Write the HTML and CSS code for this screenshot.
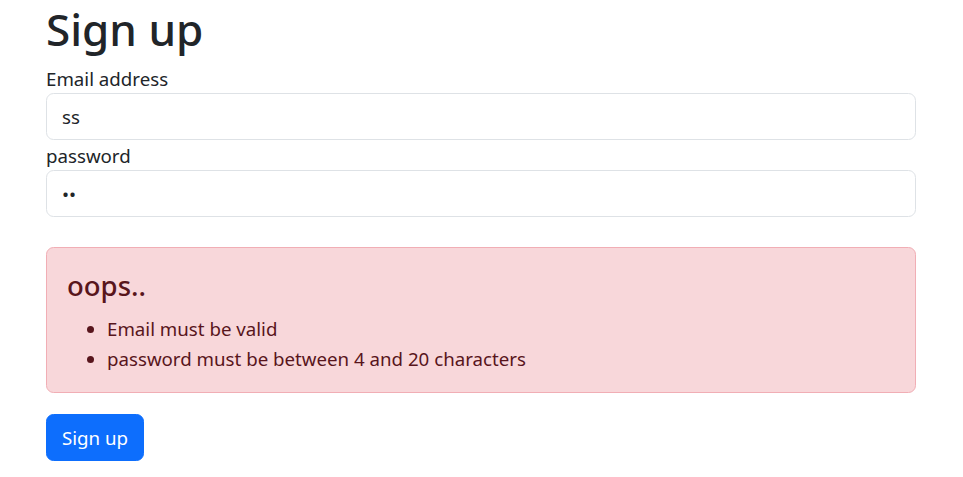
FILE: index.html
```html
<!DOCTYPE html>
<html lang="en">
<head>
<meta charset="utf-8">
<title>Sign up</title>
<link rel="stylesheet" href="styles.css">
</head>
<body>
<div class="container">
  <h1 class="title">Sign up</h1>
  <form class="form">
    <label class="label" for="email">Email address</label>
    <input class="control" id="email" type="text" value="ss">
    <label class="label" for="password">password</label>
    <input class="control" id="password" type="password" value="ss">
    <div class="alert">
      <h4 class="alert-heading">oops..</h4>
      <ul class="alert-list">
        <li>Email must be valid</li>
        <li>password must be between 4 and 20 characters</li>
      </ul>
    </div>
    <button class="btn" type="button">Sign up</button>
  </form>
</div>
</body>
</html>
```
FILE: styles.css
```css
* { box-sizing: border-box; }
html, body { margin: 0; padding: 0; background: #fff; }
body {
  font-family: "Noto Sans", "Open Sans", sans-serif;
  font-size: 18.7px;
  line-height: 30px;
  color: #212529;
}
.container {
  width: 870px;
  margin: 0 0 0 46px;
}
.title {
  margin: -1px 0 4px 0;
  font-size: 44px;
  line-height: 60px;
  font-weight: 500;
}
.form { display: flex; flex-direction: column; align-items: stretch; }
.label { display: block; line-height: 30px; padding-top: 1px; margin-bottom: -1px; }
.control {
  display: block;
  width: 100%;
  height: 47px;
  padding: 7px 15px;
  font: inherit;
  color: #212529;
  background: #fff;
  border: 1px solid #dee2e6;
  border-radius: 7.5px;
  outline: none;
}
.alert {
  margin-top: 30px;
  margin-bottom: 21px;
  padding: 20px 20px 18px 20px;
  background: #f8d7da;
  border: 1px solid #f1aeb5;
  border-radius: 7.5px;
  color: #58151c;
}
.alert-heading {
  margin: 0 0 10px 0;
  font-size: 27.5px;
  line-height: 36px;
  font-weight: 500;
}
.alert-list {
  margin: 0;
  padding-left: 40px;
}
.btn {
  align-self: flex-start;
  height: 47px;
  padding: 7px 15px;
  font: inherit;
  color: #fff;
  background: #0d6efd;
  border: 1px solid #0d6efd;
  border-radius: 7.5px;
}
```
